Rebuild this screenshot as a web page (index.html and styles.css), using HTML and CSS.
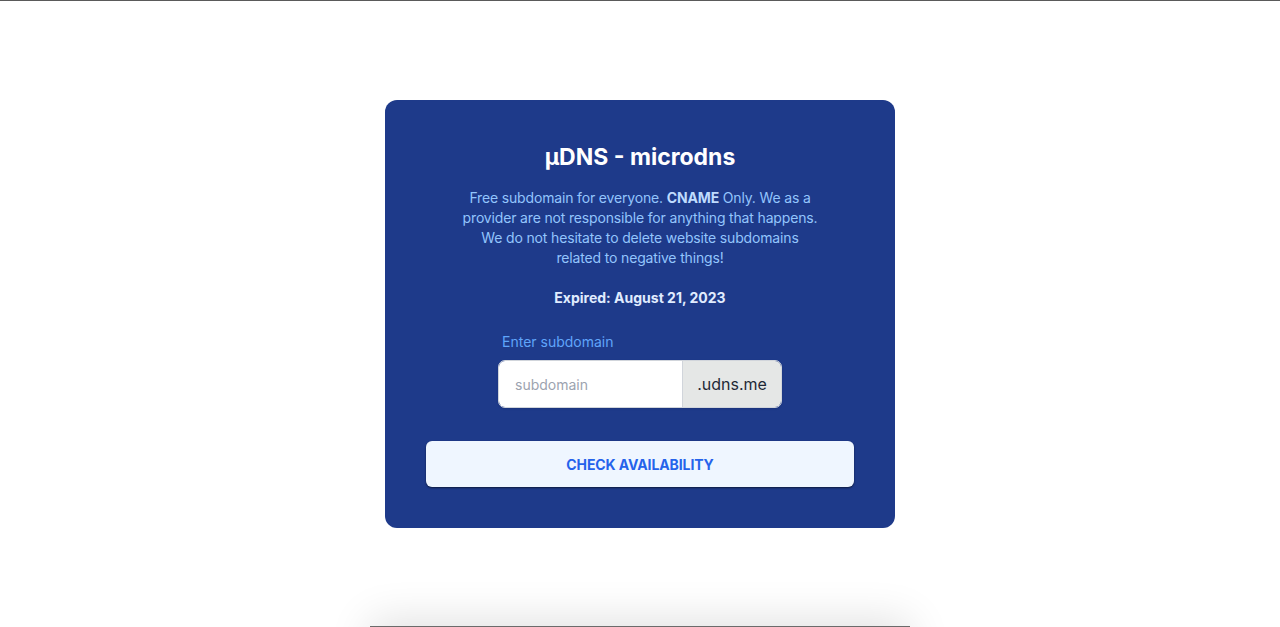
FILE: index.html
```html
<!DOCTYPE html>
<html lang="en">
<head>
<meta charset="utf-8">
<title>µDNS - microdns</title>
<link rel="stylesheet" href="styles.css">
</head>
<body>
<main class="page">
  <section class="card">
    <h1 class="title">µDNS - microdns</h1>
    <p class="desc">Free subdomain for everyone. <strong>CNAME</strong> Only. We as a provider are not responsible for anything that happens. We do not hesitate to delete website subdomains related to negative things!</p>
    <p class="expired">Expired: August 21, 2023</p>
    <form class="form">
      <div class="field">
        <label class="label" for="sub">Enter subdomain</label>
        <div class="group">
          <input class="input" id="sub" type="text" placeholder="subdomain">
          <span class="addon">.udns.me</span>
        </div>
      </div>
      <button class="btn" type="button">CHECK AVAILABILITY</button>
    </form>
  </section>
  <section class="next"></section>
</main>
</body>
</html>
```

FILE: styles.css
```css
* { box-sizing: border-box; }
html, body { margin: 0; padding: 0; }
body {
  background: #ffffff;
  font-family: Inter, "Noto Sans", sans-serif;
  border-top: 1px solid #5a5a5a;
  height: 627px;
  overflow: hidden;
}
.page {
  height: 626px;
  overflow: hidden;
  display: flex;
  flex-direction: column;
  align-items: center;
  padding-top: 99px;
  gap: 98px;
}
.card {
  flex: none;
  width: 510px;
  background: #1e3a8a;
  border-radius: 12px;
  padding: 43px 41px 41px;
  display: flex;
  flex-direction: column;
  align-items: center;
  text-align: center;
}
.title {
  margin: 0;
  color: #ffffff;
  font-size: 23px;
  line-height: 28px;
  font-weight: 700;
  letter-spacing: 0;
}
.desc {
  margin: 17px 0 0;
  width: 360px;
  color: #93c5fd;
  font-size: 14px;
  line-height: 20px;
  letter-spacing: -0.16px;
}
.desc strong { color: #bfdbfe; font-weight: 700; }
.expired {
  margin: 20px 0 0;
  color: #e0ecff;
  font-size: 14px;
  line-height: 20px;
  font-weight: 700;
}
.form {
  margin-top: 24px;
  width: 100%;
  display: flex;
  flex-direction: column;
  align-items: center;
  gap: 33px;
}
.field {
  display: flex;
  flex-direction: column;
  gap: 8px;
  width: 284px;
}
.label {
  text-align: left;
  padding-left: 4px;
  color: #60a5fa;
  font-size: 14px;
  line-height: 20px;
}
.group {
  display: flex;
  height: 48px;
  border-radius: 7px;
  overflow: hidden;
  border: 1px solid #d1d5db;
  box-shadow: 0 1px 2px rgba(0,0,0,0.1);
}
.input {
  width: 184px;
  border: 0;
  border-right: 1px solid #d1d5db;
  padding: 0 16px;
  font-family: inherit;
  font-size: 14px;
  color: #111827;
  background: #ffffff;
  outline: none;
}
.input::placeholder { color: #9ca3af; }
.addon {
  flex: 1;
  display: flex;
  align-items: center;
  justify-content: center;
  background: #e5e7e6;
  color: #1f2937;
  font-size: 16px;
}
.btn {
  width: 100%;
  height: 46px;
  border: 0;
  border-radius: 6px;
  background: #eff6ff;
  color: #2563eb;
  font-family: inherit;
  font-size: 14px;
  font-weight: 700;
  letter-spacing: -0.1px;
  box-shadow: 0 1px 2px rgba(0,0,0,0.55);
  cursor: pointer;
}
.next {
  flex: none;
  width: 540px;
  height: 300px;
  border-top: 1px solid #6b6b6b;
  background: #ffffff;
  box-shadow: 0 -6px 40px rgba(0,0,0,0.12);
}
```
